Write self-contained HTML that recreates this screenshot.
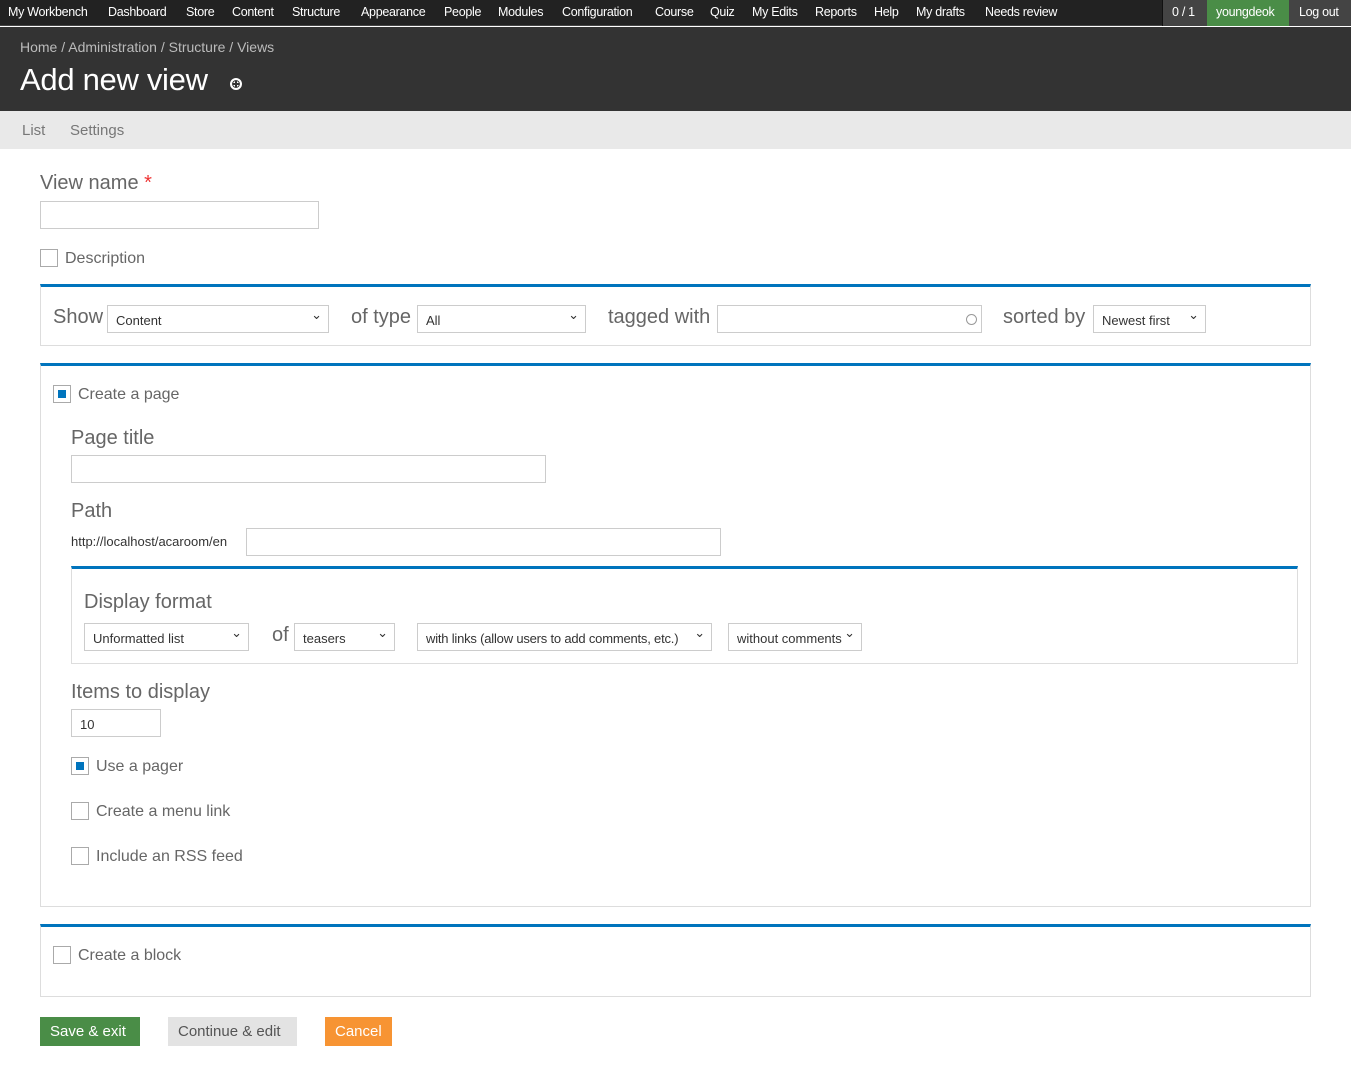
<!DOCTYPE html>
<html><head><style>
*{box-sizing:border-box;margin:0;padding:0}
body{width:1351px;height:1080px;background:#fff;font-family:"Liberation Sans",sans-serif;color:#444;position:relative;overflow:hidden}
.a{position:absolute}
#top{left:0;top:0;width:1351px;height:26px;background:#222;border-bottom:1px solid #444}
#top span{position:absolute;top:5px;font-size:12.5px;color:#fff;letter-spacing:-0.3px}
#hdr{left:0;top:27px;width:1351px;height:84px;background:#333}
#tabs{left:0;top:111px;width:1351px;height:38px;background:#e9e9e9}
.lbl{font-size:20px;color:#666;font-weight:300}
.inp{border:1px solid #ccc;background:#fff;height:28px}
.sel{border:1px solid #ccc;background:#fff;height:28px;font-size:13px;color:#333;padding:7px 8px;white-space:nowrap}
.sel.ar:after{content:"⌄";position:absolute;right:6px;top:1px;font-size:13px}
.box{border:1px solid #ddd;border-top:3px solid #0074bd}
.cb{width:18px;height:18px;border:1px solid #aaa;background:#fff}
.cb.on:after{content:"";position:absolute;left:4px;top:4px;width:8px;height:8px;background:#0074bd}
.t16{font-size:16px;color:#666}
.btn{height:29px;font-size:15px;padding:6px 10px}
</style></head><body>
<div id="top" class="a">
<span style="left:8px">My Workbench</span><span style="left:108px">Dashboard</span><span style="left:186px">Store</span><span style="left:232px">Content</span><span style="left:292px">Structure</span><span style="left:361px">Appearance</span><span style="left:444px">People</span><span style="left:498px">Modules</span><span style="left:562px">Configuration</span><span style="left:655px">Course</span><span style="left:710px">Quiz</span><span style="left:752px">My Edits</span><span style="left:815px">Reports</span><span style="left:874px">Help</span><span style="left:916px">My drafts</span><span style="left:985px">Needs review</span>
<div class="a" style="left:1162px;top:0;width:45px;height:26px;background:#444;border-left:1px solid #111"></div><span style="left:1172px">0 / 1</span>
<div class="a" style="left:1207px;top:0;width:82px;height:26px;background:#4a8d47"></div><span style="left:1216px">youngdeok</span>
<div class="a" style="left:1289px;top:0;width:62px;height:26px;background:#444"></div><span style="left:1299px">Log out</span>
</div>
<div id="hdr" class="a">
<div class="a" style="left:20px;top:12px;font-size:14px;color:#bbb">Home / Administration / Structure / Views</div>
<div class="a" style="left:20px;top:35px;font-size:31px;color:#fff;font-weight:300;letter-spacing:-0.3px">Add new view</div>
<div class="a" style="left:230px;top:51px;width:12px;height:12px;border-radius:50%;background:#fff;border:2px solid #fff;box-shadow:inset 0 0 0 1px #333"><div class="a" style="left:1px;top:3px;width:6px;height:2px;background:#333"></div><div class="a" style="left:3px;top:1px;width:2px;height:6px;background:#333"></div></div>
</div>
<div id="tabs" class="a"><span class="a" style="left:22px;top:11px;font-size:15px;color:#777">List</span><span class="a" style="left:70px;top:11px;font-size:15px;color:#777">Settings</span></div>

<div class="a lbl" style="left:40px;top:172px">View name <span style="color:#e33">*</span></div>
<div class="a inp" style="left:40px;top:201px;width:279px"></div>
<div class="a cb" style="left:40px;top:249px"></div><div class="a t16" style="left:65px;top:250px">Description</div>

<div class="a box" style="left:40px;top:284px;width:1271px;height:62px"></div>
<div class="a lbl" style="left:53px;top:306px">Show</div>
<div class="a sel ar" style="left:107px;top:305px;width:222px">Content</div>
<div class="a lbl" style="left:351px;top:306px">of type</div>
<div class="a sel ar" style="left:417px;top:305px;width:169px">All</div>
<div class="a lbl" style="left:608px;top:306px">tagged with</div>
<div class="a inp" style="left:717px;top:305px;width:265px"><div class="a" style="right:4px;top:8px;width:11px;height:11px;border:1.5px solid #999;border-radius:50%"></div></div>
<div class="a lbl" style="left:1003px;top:306px">sorted by</div>
<div class="a sel ar" style="left:1093px;top:305px;width:113px">Newest first</div>

<div class="a box" style="left:40px;top:363px;width:1271px;height:544px"></div>
<div class="a cb on" style="left:53px;top:385px"></div><div class="a t16" style="left:78px;top:386px">Create a page</div>
<div class="a lbl" style="left:71px;top:427px">Page title</div>
<div class="a inp" style="left:71px;top:455px;width:475px"></div>
<div class="a lbl" style="left:71px;top:500px">Path</div>
<div class="a" style="left:71px;top:534px;font-size:13px;color:#333">http://localhost/acaroom/en</div>
<div class="a inp" style="left:246px;top:528px;width:475px"></div>
<div class="a box" style="left:71px;top:566px;width:1227px;height:98px"></div>
<div class="a lbl" style="left:84px;top:591px">Display format</div>
<div class="a sel ar" style="left:84px;top:623px;width:165px">Unformatted list</div>
<div class="a lbl" style="left:272px;top:624px">of</div>
<div class="a sel ar" style="left:294px;top:623px;width:101px">teasers</div>
<div class="a sel ar" style="left:417px;top:623px;width:295px;padding-right:20px;letter-spacing:-0.2px">with links (allow users to add comments, etc.)</div>
<div class="a sel ar" style="left:728px;top:623px;width:134px;padding-right:16px">without comments</div>
<div class="a lbl" style="left:71px;top:681px">Items to display</div>
<div class="a sel" style="left:71px;top:709px;width:90px">10</div>
<div class="a cb on" style="left:71px;top:757px"></div><div class="a t16" style="left:96px;top:758px">Use a pager</div>
<div class="a cb" style="left:71px;top:802px"></div><div class="a t16" style="left:96px;top:803px">Create a menu link</div>
<div class="a cb" style="left:71px;top:847px"></div><div class="a t16" style="left:96px;top:848px">Include an RSS feed</div>

<div class="a box" style="left:40px;top:924px;width:1271px;height:73px"></div>
<div class="a cb" style="left:53px;top:946px"></div><div class="a t16" style="left:78px;top:947px">Create a block</div>

<div class="a btn" style="left:40px;top:1017px;width:100px;background:#4a8d47;color:#fff">Save &amp; exit</div>
<div class="a btn" style="left:168px;top:1017px;width:129px;background:#e3e3e3;color:#555">Continue &amp; edit</div>
<div class="a btn" style="left:325px;top:1017px;width:67px;background:#f79433;color:#fff">Cancel</div>
</body></html>
